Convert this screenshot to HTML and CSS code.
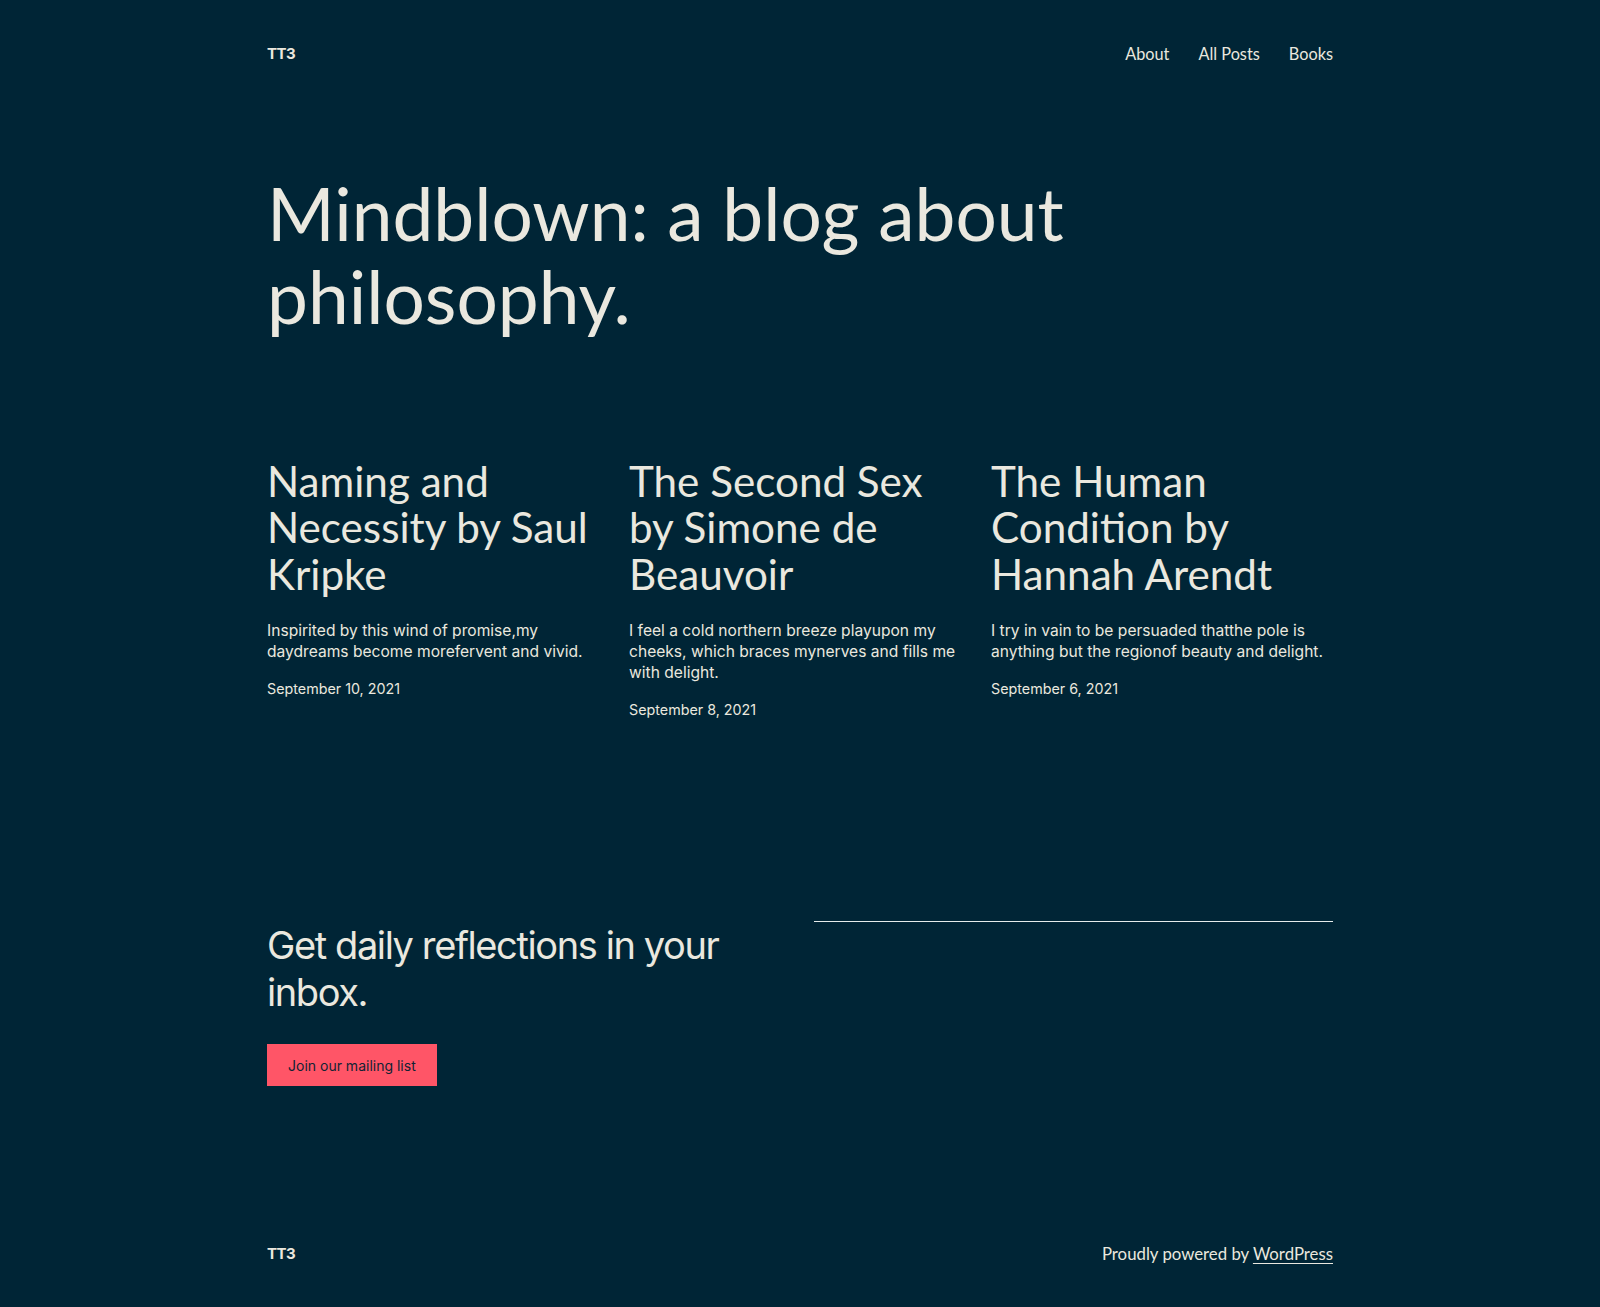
FILE: index.html
```html
<!DOCTYPE html>
<html lang="en">
<head>
<meta charset="utf-8">
<title>TT3 – Mindblown</title>
<link rel="stylesheet" href="styles.css">
</head>
<body>
<div class="page">
  <header class="site-header">
    <a class="site-title" href="#">TT3</a>
    <nav class="nav">
      <a href="#">About</a>
      <a href="#">All Posts</a>
      <a href="#">Books</a>
    </nav>
  </header>

  <h1 class="hero">Mindblown: a blog about philosophy.</h1>

  <section class="posts">
    <article class="post">
      <h2 class="post-title">Naming and Necessity by Saul Kripke</h2>
      <p class="excerpt">Inspirited by this wind of promise,my daydreams become morefervent and vivid.</p>
      <p class="date">September 10, 2021</p>
    </article>
    <article class="post">
      <h2 class="post-title">The Second Sex by Simone de Beauvoir</h2>
      <p class="excerpt">I feel a cold northern breeze playupon my cheeks, which braces mynerves and fills me with delight.</p>
      <p class="date">September 8, 2021</p>
    </article>
    <article class="post">
      <h2 class="post-title">The Human Condition by Hannah Arendt</h2>
      <p class="excerpt">I try in vain to be persuaded thatthe pole is anything but the regionof beauty and delight.</p>
      <p class="date">September 6, 2021</p>
    </article>
  </section>

  <section class="newsletter">
    <div class="nl-left">
      <h2 class="nl-title">Get daily reflections in your inbox.</h2>
      <a class="button" href="#">Join our mailing list</a>
    </div>
    <div class="nl-right">
      <hr class="sep">
    </div>
  </section>

  <footer class="site-footer">
    <a class="site-title" href="#">TT3</a>
    <p class="powered">Proudly powered by <a href="#">WordPress</a></p>
  </footer>
</div>
</body>
</html>
```

FILE: styles.css
```css
html, body {
  margin: 0;
  padding: 0;
}
body {
  background: #002536;
  color: #eae8df;
  font-family: Inter, "Liberation Sans", sans-serif;
}
a {
  color: inherit;
  text-decoration: none;
}
.page {
  width: 1066px;
  margin: 0 auto;
}
.site-header {
  display: flex;
  justify-content: space-between;
  align-items: center;
  padding-top: 42px;
}
.site-title {
  font-family: Inter, "Liberation Sans", sans-serif;
  font-weight: 700;
  font-size: 15px;
  letter-spacing: -0.5px;
  line-height: 24px;
}
.nav {
  display: flex;
  gap: 29px;
  font-family: Lato, sans-serif;
  font-size: 16.3px;
  line-height: 24px;
}
.hero {
  font-family: Lato, sans-serif;
  font-weight: 400;
  font-size: 73px;
  line-height: 83px;
  margin: 106px 0 0;
}
.posts {
  display: grid;
  grid-template-columns: repeat(3, 1fr);
  gap: 20px;
  margin-top: 120px;
}
.post-title {
  font-family: Lato, sans-serif;
  font-weight: 400;
  font-size: 42.2px;
  line-height: 46.4px;
  margin: 0;
}
.excerpt {
  font-size: 15.6px;
  line-height: 21px;
  margin: 23px 0 0;
}
.date {
  font-size: 14.3px;
  line-height: 20px;
  margin: 17px 0 0;
}
.newsletter {
  display: grid;
  grid-template-columns: 519px 1fr;
  gap: 28px;
  margin-top: 201px;
}
.nl-title {
  font-weight: 400;
  font-size: 38px;
  letter-spacing: -1.4px;
  line-height: 47px;
  margin: 1px 0 0;
}
.button {
  display: inline-flex;
  align-items: center;
  height: 42px;
  padding: 0 21px;
  margin-top: 28px;
  background: #ff5567;
  color: #0f2334;
  font-size: 14px;
}
.sep {
  margin: 0;
  border: 0;
  border-top: 1px solid #e6ecec;
}
.site-footer {
  display: flex;
  justify-content: space-between;
  align-items: center;
  margin-top: 156px;
  padding-bottom: 40px;
}
.powered {
  margin: 0;
  font-family: Lato, sans-serif;
  font-size: 16.8px;
  line-height: 24px;
}
.powered a {
  text-decoration: underline;
  text-underline-offset: 3px;
}
```
